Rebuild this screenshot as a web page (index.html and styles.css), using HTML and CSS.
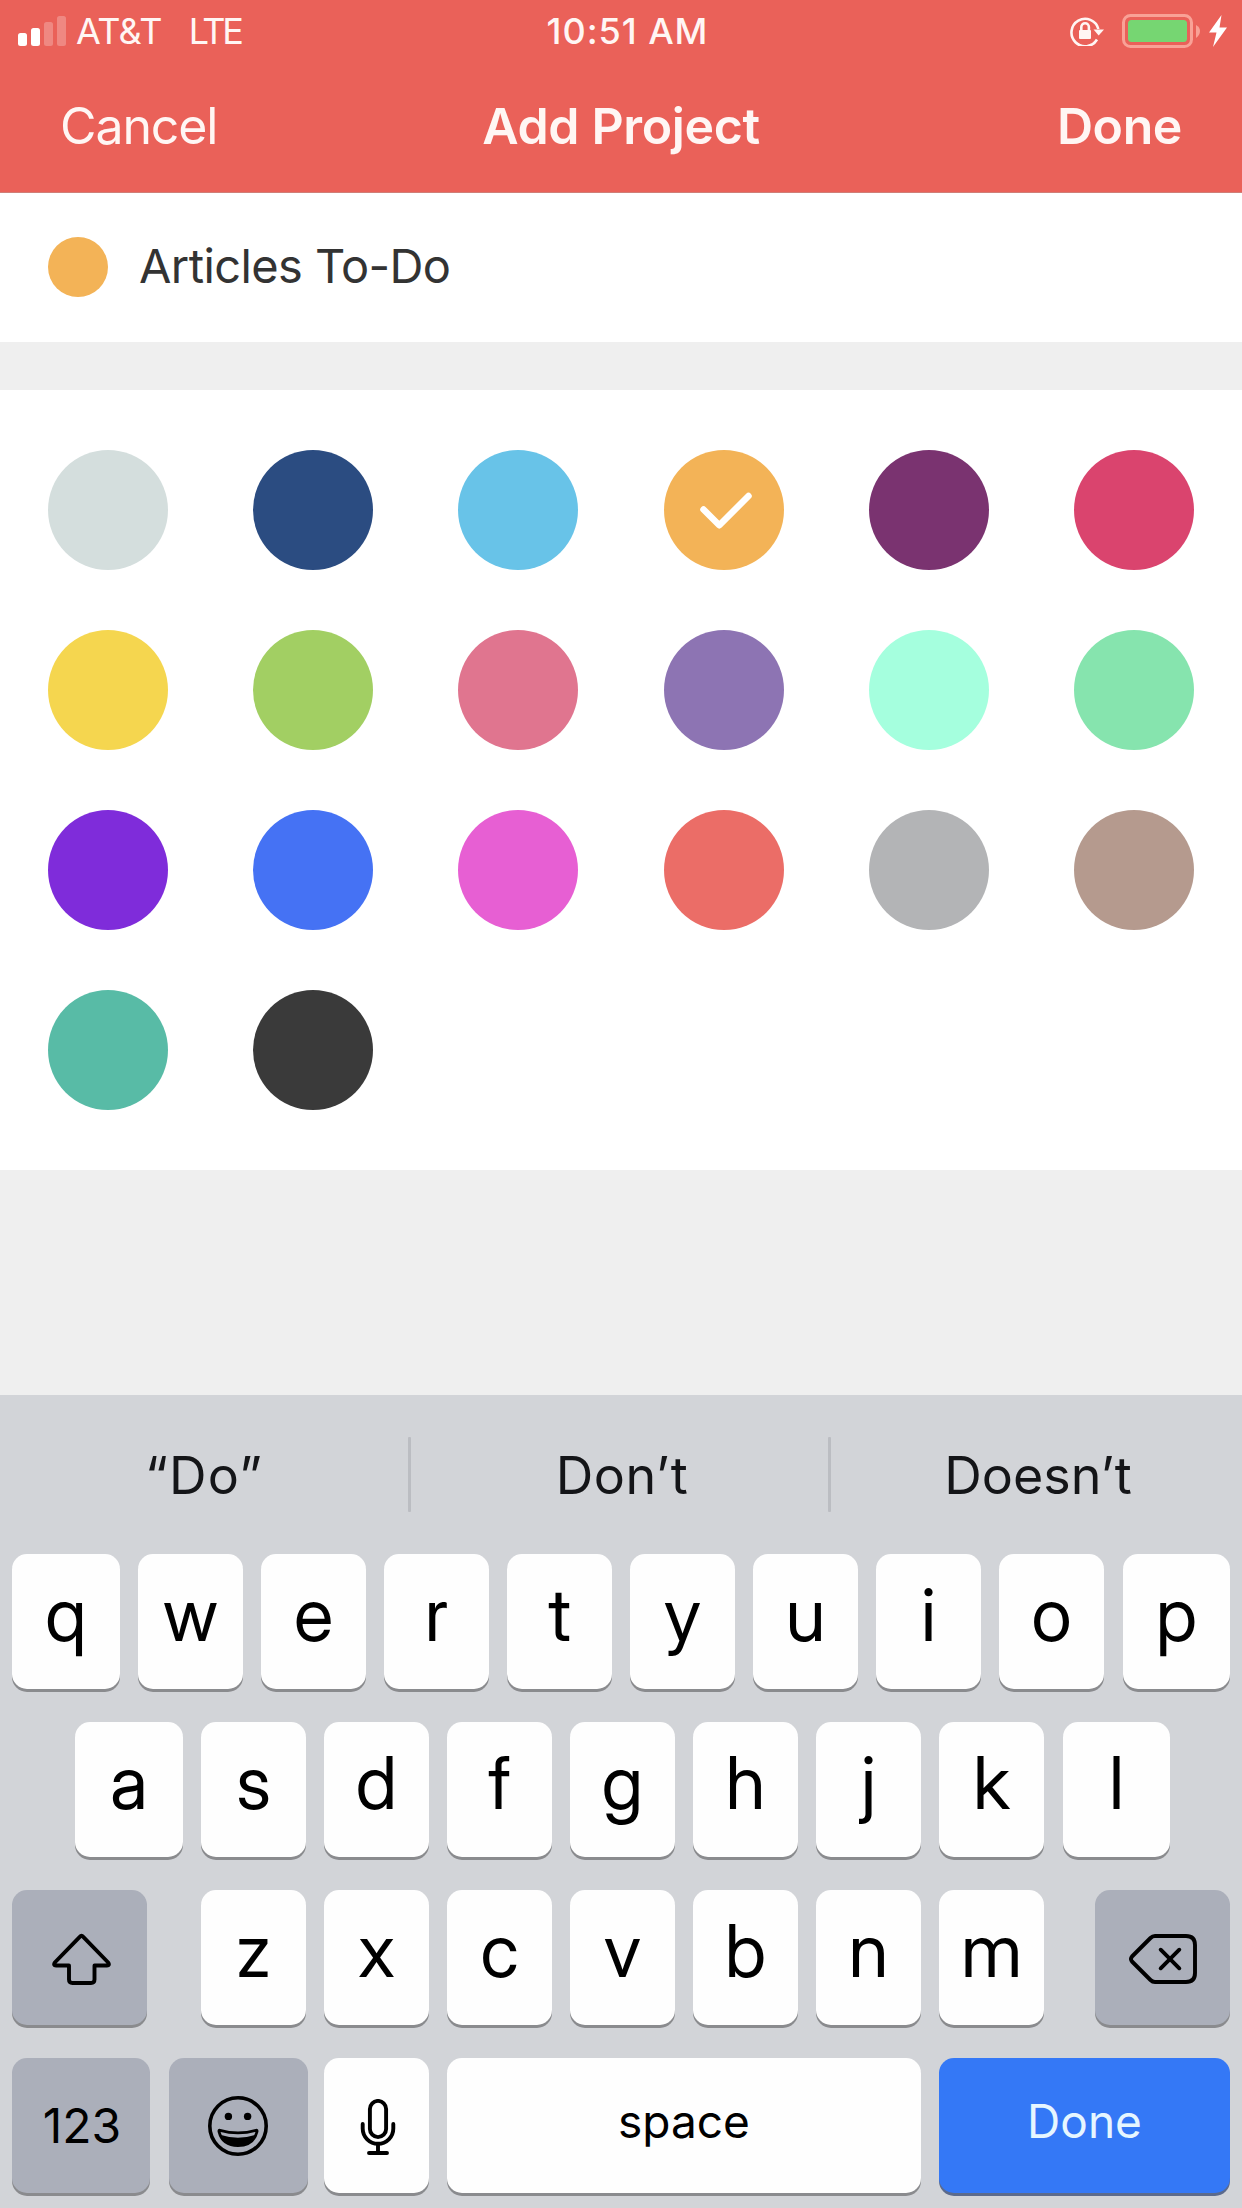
FILE: index.html
```
<!DOCTYPE html>
<html lang="en">
<head>
    <meta charset="UTF-8">
    <meta name="viewport" content="width=device-width, initial-scale=1.0">
    <title>Add Project</title>
    <link rel="stylesheet" href="styles.css">
</head>
<body>
    <header class="header">
        <div class="status-bar">
            <div class="status-left">
                <svg class="signal" viewBox="0 0 48 30">
                    <rect x="0" y="17" width="9" height="13" rx="2.5"/>
                    <rect x="13" y="12" width="9" height="18" rx="2.5"/>
                    <rect class="signal-off" x="26" y="6" width="9" height="24" rx="2.5"/>
                    <rect class="signal-off" x="39" y="0" width="9" height="30" rx="2.5"/>
                </svg>
                <span class="carrier">AT&amp;T</span>
                <span class="network">LTE</span>
            </div>
            <div class="time">10:51 AM</div>
            <div class="status-right">
                <svg class="rotation-lock" viewBox="0 0 34 30">
                    <path class="ring" d="M27 23.5 A13.7 13.7 0 1 1 28.4 13"/>
                    <path d="M23.5 13.5 H34 L28.7 19.5 Z"/>
                    <rect x="9" y="14" width="12" height="9" rx="1"/>
                    <path class="shackle" d="M11.3 15 V11 A3.8 3.8 0 0 1 18.9 11 V15"/>
                </svg>
                <svg class="battery" viewBox="0 0 78 34">
                    <rect class="battery-case" x="1.5" y="1.5" width="68" height="31" rx="7"/>
                    <rect class="battery-level" x="6" y="6" width="59" height="22" rx="3.5"/>
                    <path class="battery-tip" d="M74 11 Q78 13 78 17 Q78 21 74 24 Z"/>
                </svg>
                <svg class="bolt" viewBox="0 0 18 32">
                    <path d="M12.5 0 L0 17.5 H7.5 L4 32 L18 12.5 H10.5 Z"/>
                </svg>
            </div>
        </div>
        <div class="nav">
            <span class="nav-cancel">Cancel</span>
            <h1 class="nav-title">Add Project</h1>
            <span class="nav-done">Done</span>
        </div>
    </header>

    <div class="name-row">
        <span class="name-dot orange"></span>
        <span class="name-text">Articles To-Do</span>
    </div>

    <div class="colors">
        <span class="color silver"></span>
        <span class="color navy"></span>
        <span class="color sky"></span>
        <span class="color orange">
            <svg class="check" viewBox="0 0 120 120">
                <path d="M39.5 59.5 L55.3 75.3 L84.5 46"/>
            </svg>
        </span>
        <span class="color plum"></span>
        <span class="color crimson"></span>
        <span class="color yellow"></span>
        <span class="color lime"></span>
        <span class="color rose"></span>
        <span class="color lavender"></span>
        <span class="color aqua"></span>
        <span class="color mint"></span>
        <span class="color violet"></span>
        <span class="color blue"></span>
        <span class="color pink"></span>
        <span class="color coral"></span>
        <span class="color gray"></span>
        <span class="color taupe"></span>
        <span class="color teal"></span>
        <span class="color charcoal"></span>
    </div>

    <div class="keyboard">
        <div class="suggestions">
            <span class="suggestion suggestion-quoted">“Do”</span>
            <span class="divider"></span>
            <span class="suggestion suggestion-middle">Don’t</span>
            <span class="divider"></span>
            <span class="suggestion suggestion-last">Doesn’t</span>
        </div>

        <div class="keys">
            <div class="key-row">
                <span class="key key-first">q</span>
                <span class="key">w</span>
                <span class="key">e</span>
                <span class="key">r</span>
                <span class="key">t</span>
                <span class="key">y</span>
                <span class="key">u</span>
                <span class="key">i</span>
                <span class="key">o</span>
                <span class="key key-last">p</span>
            </div>
            <div class="key-row key-row-indent">
                <span class="key key-first">a</span>
                <span class="key">s</span>
                <span class="key">d</span>
                <span class="key">f</span>
                <span class="key">g</span>
                <span class="key">h</span>
                <span class="key">j</span>
                <span class="key">k</span>
                <span class="key key-last">l</span>
            </div>
            <div class="key-row">
                <span class="key dark key-shift">
                    <svg class="shift-icon" viewBox="0 0 60 54">
                        <path d="M29 5.6 Q30.5 3.8 32 5.6 L57.2 31.5 Q59 34.5 56 34.5 H43.5 V48.5 Q43.5 52 40 52 H21.5 Q18 52 18 48.5 V34.5 H5 Q2 34.5 3.8 31.5 Z"/>
                    </svg>
                </span>
                <span class="key">z</span>
                <span class="key">x</span>
                <span class="key">c</span>
                <span class="key">v</span>
                <span class="key">b</span>
                <span class="key">n</span>
                <span class="key">m</span>
                <span class="key dark key-delete">
                    <svg class="delete-icon" viewBox="0 0 68 50">
                        <path d="M26 2 H57 Q66 2 66 11 V39 Q66 48 57 48 H26 Q23.5 48 21.5 46 L3 27.5 Q1 25 3 22.5 L21.5 4 Q23.5 2 26 2 Z"/>
                        <path d="M31.7 15.7 L50.3 34.3 M50.3 15.7 L31.7 34.3"/>
                    </svg>
                </span>
            </div>
            <div class="key-row">
                <span class="key dark key-numbers">123</span>
                <span class="key dark key-emoji">
                    <svg class="emoji-icon" viewBox="0 0 60 60">
                        <circle class="face" cx="30" cy="30" r="28.2"/>
                        <circle cx="20.4" cy="20.4" r="3.7"/>
                        <circle cx="39.6" cy="20.4" r="3.7"/>
                        <path class="mouth" d="M12 34.3 Q30 39.5 48 34.3 Q49.3 34 49 35.6 Q45.5 49.5 30 49.5 Q14.5 49.5 11 35.6 Q10.7 34 12 34.3 Z"/>
                        <path d="M13 39 Q30 44.5 47 39 Q42 50 30 50 Q18 50 13 39 Z"/>
                    </svg>
                </span>
                <span class="key key-mic">
                    <svg class="mic-icon" viewBox="0 0 36 56">
                        <rect x="9.9" y="1.9" width="16.2" height="36.2" rx="8.1"/>
                        <path d="M2.7 25 V29.5 A15.3 15.3 0 0 0 33.3 29.5 V25"/>
                        <path d="M18 45 V54 M9 54 H27"/>
                    </svg>
                </span>
                <span class="key key-space">space</span>
                <span class="key key-done">Done</span>
            </div>
        </div>
    </div>
</body>
</html>
```
FILE: styles.css
```
:root {
    --header-color: #ea6159;
    --page-color: #efefef;
    --keyboard-color: #d2d4d8;
    --key-dark: #abafba;
    --key-shadow: #8a8b8e;
    --done-color: #3478f6;
}

* {
    margin: 0;
    padding: 0;
    box-sizing: border-box;
}

body {
    width: 1242px;
    height: 2208px;
    display: flex;
    flex-direction: column;
    background-color: var(--page-color);
    font-family: 'Inter', 'Liberation Sans', sans-serif;
    overflow: hidden;
}

/* Header */
.header {
    height: 193px;
    background-color: var(--header-color);
    color: #fff6f4;
    border-bottom: 1px solid #cf7f78;
}

.status-bar {
    height: 61px;
    display: grid;
    grid-template-columns: 1fr auto 1fr;
    align-items: center;
    padding: 0 15px 0 18px;
    font-size: 36px;
    line-height: 44px;
}

.status-left,
.status-right {
    display: flex;
    align-items: center;
}

.status-right {
    justify-content: flex-end;
}

.signal {
    width: 48px;
    height: 30px;
    margin-right: 10px;
    fill: #fff;
}

.signal-off {
    opacity: 0.25;
}

.carrier {
    letter-spacing: -0.6px;
}

.network {
    margin-left: 27px;
    letter-spacing: -3.4px;
}

.time {
    font-weight: 500;
    letter-spacing: 0.95px;
    margin-left: 10px;
}

.rotation-lock {
    width: 34px;
    height: 30px;
    fill: #fff6f4;
    margin-right: 18px;
}

.rotation-lock .ring,
.rotation-lock .shackle {
    fill: none;
    stroke: #fff6f4;
    stroke-width: 2.6;
}

.battery {
    width: 78px;
    height: 34px;
    margin-right: 9px;
}

.battery-case {
    fill: none;
    stroke: #f9a196;
    stroke-width: 3;
}

.battery-level {
    fill: #76d672;
}

.battery-tip {
    fill: #f9a196;
}

.bolt {
    width: 18px;
    height: 32px;
    fill: #fff;
}

.nav {
    height: 130px;
    display: grid;
    grid-template-columns: 1fr auto 1fr;
    align-items: center;
    padding: 0 60px;
    font-size: 50px;
    line-height: 60px;
}

.nav-cancel {
    letter-spacing: -1.1px;
}

.nav-title {
    font-size: 50px;
    font-weight: 600;
    letter-spacing: -0.35px;
}

.nav-done {
    font-weight: 600;
    text-align: right;
    letter-spacing: -0.4px;
}

/* Project name */
.name-row {
    height: 149px;
    display: flex;
    align-items: center;
    gap: 31px;
    padding: 0 48px 1px;
    background-color: #fff;
    color: #333;
}

.name-dot {
    width: 60px;
    height: 60px;
    border-radius: 50%;
}

.name-text {
    padding-bottom: 2px;
    font-size: 47px;
    line-height: 58px;
    letter-spacing: -0.6px;
}

/* Color picker */
.colors {
    height: 780px;
    margin-top: 48px;
    padding: 60px 48px;
    display: grid;
    grid-template-columns: repeat(6, 120px);
    grid-auto-rows: 120px;
    justify-content: space-between;
    row-gap: 60px;
    background-color: #fff;
}

.color {
    border-radius: 50%;
}

.check {
    display: block;
    width: 120px;
    height: 120px;
    fill: none;
    stroke: #fff;
    stroke-width: 6.5;
    stroke-linecap: round;
    stroke-linejoin: round;
}

.silver { background-color: #d4dedd; }
.navy { background-color: #2b4c81; }
.sky { background-color: #68c3e8; }
.orange { background-color: #f3b357; }
.plum { background-color: #7a3370; }
.crimson { background-color: #da446e; }
.yellow { background-color: #f5d64f; }
.lime { background-color: #a2cf63; }
.rose { background-color: #e0758f; }
.lavender { background-color: #8d74b3; }
.aqua { background-color: #a5ffde; }
.mint { background-color: #86e4ae; }
.violet { background-color: #7f2cda; }
.blue { background-color: #4572f4; }
.pink { background-color: #e75fd3; }
.coral { background-color: #eb6d67; }
.gray { background-color: #b3b4b6; }
.taupe { background-color: #b59a8e; }
.teal { background-color: #58bba6; }
.charcoal { background-color: #3a3a3a; }

/* Keyboard */
.keyboard {
    height: 813px;
    margin-top: auto;
    background-color: var(--keyboard-color);
    color: #000;
}

.suggestions {
    height: 159px;
    display: grid;
    grid-template-columns: 408px 3px 417px 3px 1fr;
    align-items: center;
    text-align: center;
    font-size: 52px;
    color: #141518;
}

.suggestion {
    padding-top: 2px;
    line-height: 64px;
}

.suggestion-quoted {
    letter-spacing: 1.2px;
}

.suggestion-middle {
    padding-left: 5px;
    letter-spacing: 0.6px;
}

.suggestion-last {
    padding-left: 3px;
}

.divider {
    height: 75px;
    border-radius: 1px;
    background-color: #bbbdc2;
}

.keys {
    display: flex;
    flex-direction: column;
    gap: 33px;
    padding: 0 12px;
}

.key-row {
    display: flex;
    gap: 18px;
}

.key-row-indent {
    padding-left: 63px;
}

.key {
    width: 105px;
    height: 135px;
    display: flex;
    align-items: center;
    justify-content: center;
    padding-bottom: 13px;
    border-radius: 15px;
    background-color: #fefefe;
    box-shadow: 0 3px 0 var(--key-shadow);
    font-family: 'Inter Display', 'Inter', sans-serif;
    font-size: 73px;
    line-height: 90px;
}

.key-first {
    width: 108px;
}

.key-last {
    width: 107px;
    margin-left: 1px;
}

.dark {
    background-color: var(--key-dark);
    padding-bottom: 0;
}

.key svg {
    fill: none;
    stroke: #000;
    stroke-width: 3.9;
    stroke-linecap: round;
    stroke-linejoin: round;
}

.key-shift {
    width: 135px;
    margin-right: 36px;
    padding-left: 3px;
}

.key-delete {
    width: 135px;
    margin-left: 33px;
    padding: 3px 0 0 1px;
}

.shift-icon {
    width: 60px;
    height: 54px;
}

.delete-icon {
    width: 68px;
    height: 50px;
}

.key-numbers,
.key-space,
.key-done {
    font-family: 'Inter', 'Liberation Sans', sans-serif;
    line-height: 58px;
}

.key-numbers {
    width: 138px;
    padding-left: 2px;
    font-size: 48px;
}

.key-emoji {
    width: 139px;
    margin: 0 -2px 0 1px;
    padding-right: 1px;
}

.emoji-icon {
    width: 60px;
    height: 60px;
}

.emoji-icon circle,
.emoji-icon path {
    fill: #000;
    stroke: none;
}

.emoji-icon .face {
    fill: none;
    stroke: #000;
    stroke-width: 3.6;
}

.emoji-icon .mouth {
    fill: none;
    stroke: #000;
    stroke-width: 2.8;
}

.key-mic {
    padding: 3px 0 0 2px;
}

.mic-icon {
    width: 36px;
    height: 56px;
}

.key-space {
    width: 474px;
    padding-bottom: 9px;
    font-size: 46px;
}

.key-done {
    width: 291px;
    padding-bottom: 9px;
    background-color: var(--done-color);
    box-shadow: 0 3px 0 #5b6a8c;
    color: #e6f6ff;
    font-size: 46px;
}
```
